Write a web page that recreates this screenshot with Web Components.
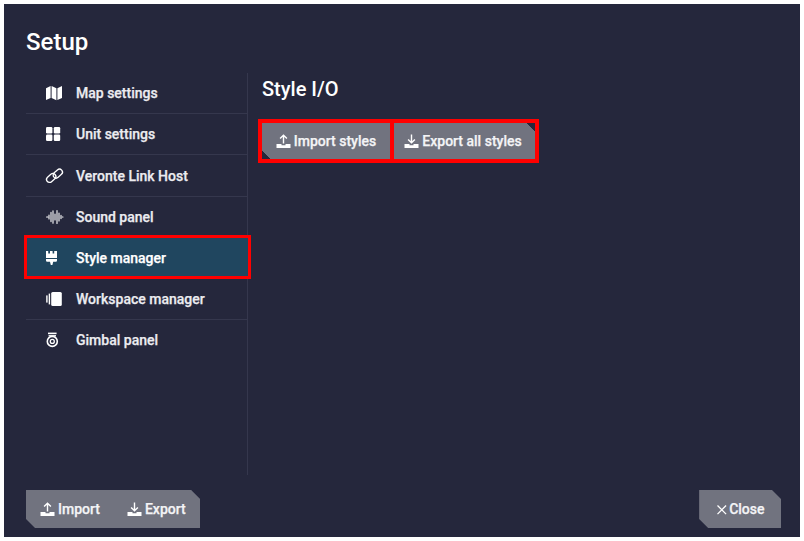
<!DOCTYPE html>
<html>
<head>
<meta charset="utf-8">
<style>
html, body { margin: 0; height: 100%; background: #fff; }
body { padding: 4px 4px 4px 4px; box-sizing: border-box; width: 804px; height: 541px; overflow: hidden; font-family: Roboto, "Liberation Sans", sans-serif; }
</style>
</head>
<body>

<setup-panel>
    <side-item icon="map">Map settings</side-item>
    <side-item icon="grid">Unit settings</side-item>
    <side-item icon="link">Veronte Link Host</side-item>
    <side-item icon="sound">Sound panel</side-item>
    <side-item icon="brush" selected>Style manager</side-item>
    <side-item icon="workspace">Workspace manager</side-item>
    <side-item icon="gimbal" last>Gimbal panel</side-item>

    <cut-button slot="actions" icon="up" cut="bl" marked style="width:128px">Import styles</cut-button>
    <cut-button slot="actions" icon="down" cut="tr" marked style="width:141px">Export all styles</cut-button>

    <cut-group slot="footer-left">
        <cut-button icon="up" plain>Import</cut-button>
        <cut-button icon="down" plain>Export</cut-button>
    </cut-group>
    <cut-group slot="footer-right">
        <cut-button icon="close" plain>Close</cut-button>
    </cut-group>
</setup-panel>

<script>
const ICONS = {
    map: '<path fill="#fff" d="M0 3.2 4.6 1v12L0 15zM5.6 1l4.8 2.2v12L5.6 13zM11.4 3.2 16 1v12l-4.6 2z"/>',
    grid: '<rect fill="#fff" x="0" y="1" width="6.4" height="6.4" rx="1.2"/><rect fill="#fff" x="7.8" y="1" width="6.4" height="6.4" rx="1.2"/><rect fill="#fff" x="0" y="8.6" width="6.4" height="6.4" rx="1.2"/><rect fill="#fff" x="7.8" y="8.6" width="6.4" height="6.4" rx="1.2"/>',
    link: '<g fill="none" stroke="#fff" stroke-width="1.3"><rect x="0" y="7" width="10.4" height="6" rx="3" transform="rotate(-42 5.2 10)"/><rect x="6.6" y="2.6" width="10.4" height="6" rx="3" transform="rotate(-42 11.8 5.6)"/></g>',
    sound: '<path fill="none" stroke="#fff" stroke-width="1.1" stroke-linecap="round" d="M.6 8h1.2M3 6v4M5 3.4v9.2M7 1.8v12.4M9 5v6M11 1.6v12.8M13 4v8M15 6.4v3.2M16.4 8h.6"/>',
    brush: '<path fill="#fff" d="M0 1h2.2v2.4H4V1h2.6v2.4h1.6V1H11v7H0zM0 9h11v1.6a1.2 1.2 0 0 1-1.2 1.2H7.2L6.4 15h-1.6L4 11.8H1.2A1.2 1.2 0 0 1 0 10.6z"/>',
    workspace: '<rect fill="#fff" x="5.2" y="1" width="10.6" height="14" rx="1.5"/><rect fill="#fff" x="2.7" y="2.6" width="1.4" height="10.8"/><rect fill="#fff" x=".2" y="4.4" width="1.4" height="7.2"/>',
    gimbal: '<g fill="none" stroke="#fff"><path stroke-width="1.6" d="M2 1.4h8.6"/><path stroke-width="1.4" d="M2.6 3.8h7.4"/><circle stroke-width="1.6" cx="6.3" cy="9.4" r="5"/><circle stroke-width="1.3" cx="6.3" cy="9.4" r="2"/></g>',
    up: '<path fill="#fff" d="M.5 11h5v1.2h4V11h5v4H.5z"/><path fill="none" stroke="#fff" stroke-width="1.4" d="M7.5 10.5V2.5M4.1 5.6 7.5 2.2l3.4 3.4"/>',
    down: '<path fill="#fff" d="M.5 11h5v1.2h4V11h5v4H.5z"/><path fill="none" stroke="#fff" stroke-width="1.4" d="M7.5 1.5v8M4.1 6.4 7.5 9.8l3.4-3.4"/>',
    close: '<path fill="none" stroke="#fff" stroke-width="1.3" d="M3.5 4.5l8.6 8.6M12.1 4.5l-8.6 8.6"/>'
}

class SetupPanel extends HTMLElement {
    constructor() {
        super()
        this.attachShadow({ mode: "open" })
    }

    connectedCallback() {
        if (this.shadowRoot.children.length > 0) {
            return
        }
        this.shadowRoot.innerHTML = `
            <style>
                :host {
                    display: flex;
                    flex-direction: column;
                    width: 796px;
                    height: 533px;
                    box-sizing: border-box;
                    padding: 23px 19px 9px 22px;
                    background: #25273c;
                    color: #fff;
                }
                h1 {
                    margin: 0;
                    height: 46px;
                    font: 500 24px/30px Roboto, "Liberation Sans", sans-serif;
                }
                .body {
                    display: flex;
                    height: 402px;
                }
                nav {
                    width: 221px;
                    flex: none;
                    border-right: 1px solid #35374d;
                }
                main {
                    flex: 1;
                    padding-left: 14px;
                }
                h2 {
                    margin: 0;
                    height: 50px;
                    font: 500 20px/33px Roboto, "Liberation Sans", sans-serif;
                }
                .actions {
                    display: flex;
                    gap: 4px;
                }
                footer {
                    display: flex;
                    justify-content: space-between;
                    margin-top: 15px;
                }
            </style>
            <h1>Setup</h1>
            <div class="body">
                <nav><slot></slot></nav>
                <main>
                    <h2>Style I/O</h2>
                    <div class="actions"><slot name="actions"></slot></div>
                </main>
            </div>
            <footer>
                <slot name="footer-left"></slot>
                <slot name="footer-right"></slot>
            </footer>
        `
    }
}

class SideItem extends HTMLElement {
    constructor() {
        super()
        this.attachShadow({ mode: "open" })
    }

    connectedCallback() {
        if (this.shadowRoot.children.length > 0) {
            return
        }
        const icon = ICONS[this.getAttribute("icon")]
        this.shadowRoot.innerHTML = `
            <style>
                :host {
                    display: flex;
                    align-items: center;
                    height: 39.9px;
                    padding: .3px 0 0 20px;
                    gap: 14px;
                    border-bottom: 1px solid #35374d;
                    font: 500 14px/16px Roboto, "Liberation Sans", sans-serif;
                    -webkit-text-stroke: .25px;
                    color: #ececf0;
                }
                :host([selected]) {
                    background: #20465f;
                    color: #fff;
                    border-bottom-color: transparent;
                    outline: 3px solid #f00;
                    outline-offset: -1px;
                    margin: -1px -2px 2.2px 0;
                    height: 35.5px;
                    padding-top: 3.5px;
                    position: relative;
                }
                :host([last]) { border-bottom: none; }
                svg { width: 16px; height: 16px; flex: none; overflow: visible; }
            </style>
            <svg viewBox="0 0 16 16">${icon}</svg>
            <span><slot></slot></span>
        `
    }
}

class CutButton extends HTMLElement {
    constructor() {
        super()
        this.attachShadow({ mode: "open" })
    }

    connectedCallback() {
        if (this.shadowRoot.children.length > 0) {
            return
        }
        const icon = ICONS[this.getAttribute("icon")]
        this.shadowRoot.innerHTML = `
            <style>
                :host {
                    display: inline-flex;
                    align-items: center;
                    justify-content: center;
                    height: 36px;
                    gap: 2px;
                    font: 500 14px/16px Roboto, "Liberation Sans", sans-serif;
                    -webkit-text-stroke: .25px;
                    color: #f4f4f6;
                    background: #71737f;
                    box-sizing: border-box;
                    white-space: nowrap;
                }
                :host([marked]) {
                    outline: 4px solid #f00;
                    position: relative;
                }
                :host([cut="bl"]) { background: linear-gradient(45deg, #25273c 6px, #71737f 6px); }
                :host([cut="tr"]) { background: linear-gradient(225deg, #25273c 6px, #71737f 6px); padding-right: 3px; }
                :host([plain]) { background: none; padding: 0; }
                :host([icon="close"]) { gap: 0; margin: 0 2px 0 1px; }
                :host([icon="close"]) svg { margin-right: -1px; }
                svg { width: 16px; height: 16px; flex: none; }
            </style>
            <svg viewBox="0 0 16 16">${icon}</svg>
            <span><slot></slot></span>
        `
    }
}

class CutGroup extends HTMLElement {
    constructor() {
        super()
        this.attachShadow({ mode: "open" })
    }

    connectedCallback() {
        if (this.shadowRoot.children.length > 0) {
            return
        }
        this.shadowRoot.innerHTML = `
            <style>
                :host {
                    display: flex;
                    align-items: center;
                    height: 38px;
                    padding: 0 14.5px 0 14px;
                    gap: 27px;
                    background: #71737f;
                    clip-path: polygon(0 0, calc(100% - 9px) 0, 100% 9px, 100% 100%, 9px 100%, 0 calc(100% - 9px));
                }
            </style>
            <slot></slot>
        `
    }
}

customElements.define('setup-panel', SetupPanel)
customElements.define('side-item', SideItem)
customElements.define('cut-button', CutButton)
customElements.define('cut-group', CutGroup)
</script>
</body>
</html>
